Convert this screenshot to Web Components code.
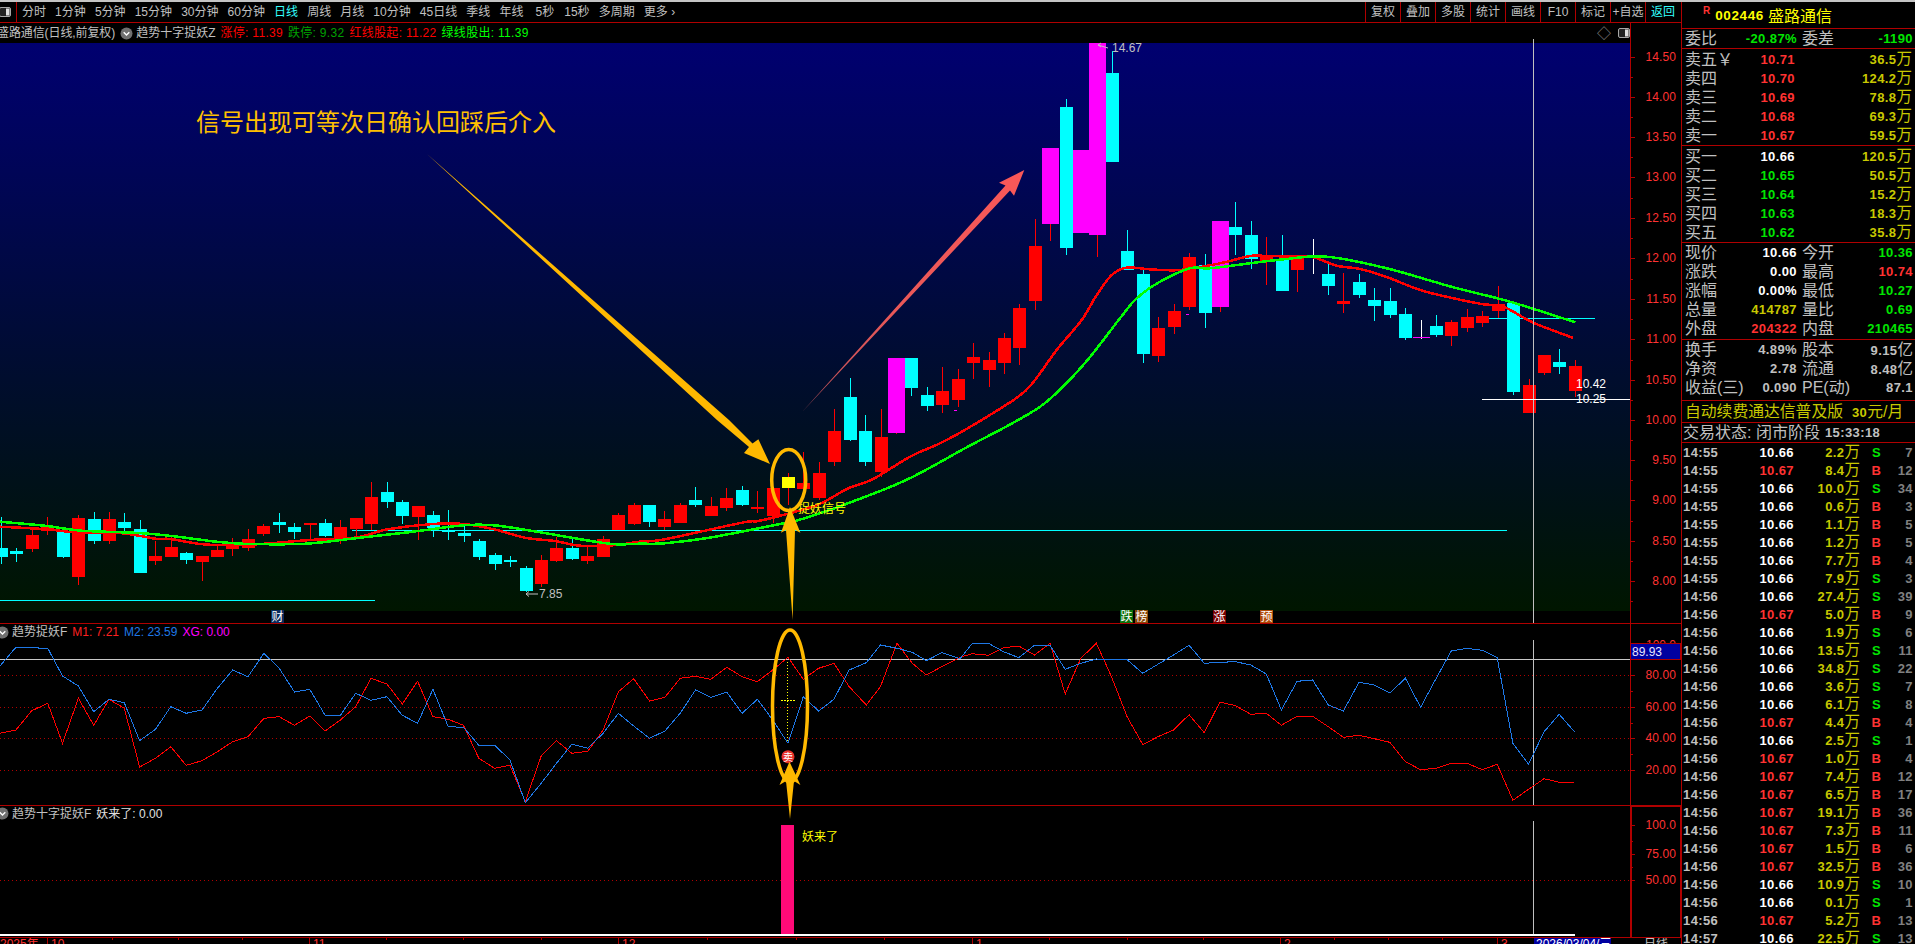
<!DOCTYPE html>
<html lang="zh"><head><meta charset="utf-8"><title>TDX</title>
<style>html,body{margin:0;padding:0;background:#000;height:100%;overflow:hidden}</style></head>
<body><tdx-app></tdx-app>
<script>
const FONT="'Liberation Sans','Noto Sans CJK SC',sans-serif";
const RED='#b00000',TXT='#c0c0c0',UP='#ff3232',DN='#00e600',VOL='#c8c800';
class Base extends HTMLElement{
  constructor(){super();this.attachShadow({mode:'open'});this.shadowRoot.innerHTML=`<style>${this.css()}</style>${this.html()}`;}
  css(){return ':host{display:block}';} html(){return '<slot></slot>';}
}
const boxIcon=`<svg width="12" height="10" viewBox="0 0 12 10"><rect x=".5" y=".5" width="11" height="9" rx="1.5" fill="#222" stroke="#a8a8a8"/><rect x="7" y="1.5" width="3.5" height="7" fill="#e0e0e0"/></svg>`;
const chevIcon=`<svg width="13" height="13" viewBox="0 0 13 13"><circle cx="6.5" cy="6.5" r="6" fill="#707070"/><path d="M3.7 5.2 6.5 8 9.3 5.2" fill="none" stroke="#fff" stroke-width="1.4"/></svg>`;

customElements.define('tdx-toolbar',class extends Base{
  css(){return `:host{display:flex;height:20px;border-bottom:1px solid ${RED};color:${TXT};font:12px/20px ${FONT};white-space:nowrap;overflow:hidden}
  .ic{width:17px;box-sizing:border-box;border-right:1px solid ${RED};display:flex;align-items:center;margin-right:5px;flex:none;overflow:hidden}
  .ic svg{margin-left:-1px}
  .tabs{display:flex;gap:9.1px;flex:1}
  .on{color:#33ffff}.w{margin-left:3px;margin-right:1px}
  .btns{display:flex;height:20px;margin-right:1px}
  .btns span{width:35px;box-sizing:border-box;border-left:1px solid ${RED};text-align:center}
  `;}
  html(){
    const tabs=['分时','1分钟','5分钟','15分钟','30分钟','60分钟','日线','周线','月线','10分钟','45日线','季线','年线','5秒','15秒','多周期','更多 ›'];
    const btn=['复权','叠加','多股','统计','画线','F10','标记','+自选','返回'];
    return `<div class="ic">${boxIcon}</div><div class="tabs">${tabs.map(t=>`<span class="${t==='日线'?'on':''} ${t==='5秒'?'w':''}">${t}</span>`).join('')}</div>
    <div class="btns">${btn.map(t=>`<span style="${t==='返回'?'color:#33ffff':''}">${t}</span>`).join('')}</div>`;
  }
});

customElements.define('tdx-legend',class extends Base{
  css(){return `:host{display:flex;align-items:center;gap:5px;white-space:nowrap;overflow:hidden;font:12px/1 ${FONT};color:${TXT};background:#000}
  ::slotted(*){flex:none}`;}
});

const commonSvgCss=`svg{display:block;overflow:visible;font:12px ${FONT}} text{shape-rendering:auto}`;
const rect=(x,y,w,h,f)=>`<rect x="${x}" y="${y}" width="${w}" height="${h}" fill="${f}"/>`;
const axisLabel=(y,t)=>`<text x="1676" y="${y+4}" text-anchor="end" fill="${UP}" letter-spacing=".1">${t}</text>`;
const tick=(y,l=5)=>rect(1630,y,l,1,RED);
const cross=(a,b)=>rect(1533,a,1,b-a,TXT);

/* candle data: [wickTop, bodyTop, bodyBot, wickBot, colour], read in zones */
const Z=[
 {base:440,c:[[232,324,350,372,'c'],[324,332,342,365,'c'],[262,285,327,335,'r'],[232,262,272,285,'r'],[265,272,351,353,'c'],[225,234,411,435,'r'],[216,237,303,312,'c'],[216,237,303,312,'r'],[219,246,264,275,'c'],[240,267,399,399,'c'],[303,348,363,375,'r'],[288,321,351,351,'r'],[336,339,360,372,'c'],[348,348,366,423,'r'],[318,330,351,351,'r'],[294,312,327,348,'r'],[267,297,324,333,'r'],[252,258,282,288,'r'],[219,246,255,279,'c'],[250,261,276,297,'c'],[249,249,255,300,'r'],[237,249,288,291,'c'],[240,261,297,312,'r'],[234,234,267,290,'r'],[126,171,252,270,'r'],[126,156,186,204,'c'],[180,186,228,252,'c'],[198,198,231,300,'r'],[213,225,264,291,'c'],[210,270,276,300,'c'],[258,279,288,306,'c'],[297,303,351,360,'c'],[339,345,372,390,'c'],[348,360,366,381,'c'],[378,384,453,456,'c'],[345,360,432,441,'r'],[291,324,363,366,'r'],[294,324,357,360,'c'],[321,348,363,372,'r'],[288,297,351,351,'r'],[219,225,270,270,'r'],[189,195,252,255,'r']]},
 {base:420,c:[[255,255,306,321,'c'],[273,297,321,330,'r'],[250,255,309,309,'r'],[201,240,255,261,'c'],[231,258,288,288,'r'],[204,234,264,273,'r'],[198,210,255,258,'c'],[213,261,267,279,'r'],[204,204,288,310,'r'],[159,171,204,255,'y'],[96,189,207,207,'r'],[126,159,234,240,'r']]},
 {base:30,c:[[1137,1203,1296,1307,'r'],[1044,1101,1230,1232,'c'],[1155,1203,1296,1307,'c'],[1137,1221,1325,1340,'r'],[984,984,1209,1212,'m'],[984,984,1074,1098,'c'],[1071,1095,1128,1143,'c'],[1011,1083,1125,1149,'r'],[1017,1047,1110,1131,'r'],[939,981,999,1047,'r'],[966,990,1020,1071,'r'],[909,924,999,1032,'r'],[822,834,954,1005,'r'],[567,648,813,840,'r'],[354,354,582,633,'m'],[207,231,654,675,'c'],[360,360,609,609,'m'],[39,39,615,681,'m'],[63,129,396,396,'c'],[600,663,720,720,'c'],[720,732,972,999,'c'],[861,894,978,996,'r'],[822,843,891,912,'r'],[669,681,831,840,'r'],[672,705,849,894,'c'],[573,573,831,846,'m'],[516,591,615,675,'c'],[573,615,687,717,'c']]},
 {base:200,c:[[111,165,183,255,'r'],[105,180,273,273,'c'],[165,165,210,276,'r'],[117,165,168,222,'w'],[187,222,258,285,'c'],[219,303,312,339,'r'],[222,246,285,294,'c'],[264,300,318,363,'c'],[264,303,345,354,'c'],[324,342,414,420,'c'],[360,411,414,417,'w'],[345,378,405,411,'c'],[360,366,408,438,'r'],[327,351,384,396,'r'],[333,348,369,381,'r'],[258,312,333,354,'r'],[309,309,576,585,'c'],[537,555,639,639,'r'],[465,465,519,525,'r'],[447,486,501,522,'c'],[480,498,573,591,'r']]}
];
const COL={r:'#ff0000',c:'#00ffff',m:'#ff00ff',y:'#ffff00'};
function candles(){
  let i=0,out='';
  for(const z of Z)for(const [wt,bt,bb,wb,k] of z.c){
    const x=1+15.43*i++, cx=Math.round(x), Y=v=>Math.round(z.base+v/3);
    const wc=k==='m'?'#ff0000':k==='y'?'#ff0000':k==='w'?'#ffffff':COL[k];
    const bc=k==='w'?'#ff00ff':COL[k];
    const bw=(k==='m'||k==='w')?17:13;
    out+=rect(cx,Y(wt),1,Y(wb)-Y(wt),wc);
    out+=rect(cx-Math.floor(bw/2),Y(bt),bw,Math.max(1,Y(bb)-Y(bt)),bc);
  }
  return out;
}
const pz5=(a)=>a.map(([X,Y])=>[X/2.45,440+Y/3]);
const pz6=(a)=>a.map(([X,Y])=>[640+X/2.45,420+Y/3]);
const pz9=(a)=>a.map(([X,Y])=>[760+X/3,30+Y/3]);
const pz10=(a)=>a.map(([X,Y])=>[1120+X/3,200+Y/3]);
const pts=a=>a.map(p=>p[0].toFixed(1)+','+p[1].toFixed(1)).join(' ');
function smooth(p){
  let d=`M${p[0][0].toFixed(1)} ${p[0][1].toFixed(1)}`;
  for(let i=0;i<p.length-1;i++){
    const a=p[Math.max(0,i-1)],b=p[i],c=p[i+1],e=p[Math.min(p.length-1,i+2)];
    const c1=[b[0]+(c[0]-a[0])/6,b[1]+(c[1]-a[1])/6],c2=[c[0]-(e[0]-b[0])/6,c[1]-(e[1]-b[1])/6];
    d+=`C${c1[0].toFixed(1)} ${c1[1].toFixed(1)} ${c2[0].toFixed(1)} ${c2[1].toFixed(1)} ${c[0].toFixed(1)} ${c[1].toFixed(1)}`;
  }
  return d;
}
const maRed=[...pz5([[0,260],[115,268],[190,278],[300,280],[380,296],[418,297],[490,312],[570,316],[640,312],[760,300],[870,293],[950,268],[1060,252],[1135,252],[1210,268],[1290,294],[1360,303],[1420,317],[1500,316],[1568,305]]),
 ...pz6([[60,358],[250,308],[290,303],[360,282],[440,252],[510,205]]),
 ...pz9([[340,1347],[450,1280],[540,1240],[640,1185],[775,1100],[825,1050],[890,960],[965,870],[1010,795],[1055,735],[1100,713]]),
 ...pz10([[90,208],[180,210],[300,190],[390,168],[440,168],[520,170],[580,172],[650,197],[720,207],[800,231],[900,270],[1000,295],[1090,313],[1150,320],[1240,368],[1360,414]])];
const maGreen=[...pz5([[0,245],[115,258],[200,272],[340,279],[420,288],[530,305],[610,312],[750,311],[870,295],[1000,277],[1135,256],[1210,256],[1300,272],[1400,293],[1500,312],[1568,311]]),
 ...pz6([[60,370],[170,353],[330,315],[400,296],[520,245]]),
 ...pz9([[445,1347],[620,1252],[760,1178],[860,1115],[970,1005]]),
 ...pz10([[0,355],[50,295],[120,245],[210,205],[270,205],[390,190],[500,177],[620,170],[800,205],[1000,262],[1170,305],[1366,367]])];

customElements.define('tdx-kline-pane',class extends Base{
  css(){return `:host{display:block;height:600px;border-bottom:1px solid ${RED};position:relative}
  tdx-legend{height:20px}
  .r{margin-left:auto;display:flex;gap:7px;align-items:center;padding-right:51px;color:#8a8a8a;font-size:14px}
  .s{letter-spacing:.3px}
  ${commonSvgCss}`;}
  html(){
    const ticks=[[57,'14.50'],[97,'14.00'],[137,'13.50'],[177,'13.00'],[218,'12.50'],[258,'12.00'],[299,'11.50'],[339,'11.00'],[380,'10.50'],[420,'10.00'],[460,'9.50'],[500,'9.00'],[541,'8.50'],[581,'8.00']];
    let ax=rect(1630,23,1,600,RED);
    ticks.forEach(([y,t],i)=>{ax+=tick(y)+axisLabel(y,t); const m=i<ticks.length-1?Math.round((y+ticks[i+1][0])/2):601; ax+=tick(m,3);});
    const mk=(x,bg,t)=>rect(x,610,13,12.5,bg)+`<text x="${x+.5}" y="621" fill="#fff" style="font-size:12px">${t}</text>`;
    return `<tdx-legend>
      <span style="margin-left:-3px;letter-spacing:-.1px">盛路通信(日线,前复权)</span>
      <span style="display:flex;margin:0 -2px 0 0">${chevIcon}</span>
      <span>趋势十字捉妖Z</span>
      <span class="s" style="color:#ff0000">涨停: 11.39</span>
      <span class="s" style="color:#00a000">跌停: 9.32</span>
      <span class="s" style="color:#ff0000">红线股起: 11.22</span>
      <span class="s" style="color:#00ff00">绿线股出: 11.39</span>
      <span class="r"><span>◇</span>${boxIcon}</span>
    </tdx-legend>
    <svg width="1681" height="580" viewBox="0 43 1681 580" shape-rendering="crispEdges">
      <defs><linearGradient id="bg" x1="0" y1="0" x2="0" y2="1"><stop offset="0" stop-color="#000070"/><stop offset="1" stop-color="#001600"/></linearGradient></defs>
      <rect x="0" y="43" width="1630" height="568" fill="url(#bg)"/>
      ${rect(0,600,375,1,'#00ffff')}${rect(352,530,1155,1,'#00ffff')}${rect(1478,318,117,1,'#00ffff')}
      ${candles()}
      ${rect(954,410,3,1,'#ff00ff')}${rect(1186,314,3,1,'#ff00ff')}
      <path d="${smooth(maRed)}" fill="none" stroke="#ff0000" stroke-width="2.5"/>
      <path d="${smooth(maGreen)}" fill="none" stroke="#00ff00" stroke-width="2.5"/>
      ${cross(39,623)}
      ${rect(1482,399,148,1,'#ffffff')}
      <text x="1112" y="52" fill="${TXT}">14.67</text>
      <path d="M1098 45 1108 48 M1098 45 1101 43 M1098 45 1101 47" stroke="${TXT}" fill="none" shape-rendering="auto"/>
      <text x="539" y="598" fill="${TXT}">7.85</text>
      <path d="M526 594 H538 M526 594 529 591.5 M526 594 529 596.5" stroke="${TXT}" fill="none" shape-rendering="auto"/>
      <text x="1576" y="388" fill="#fff">10.42</text>
      <text x="1576" y="403" fill="#fff">10.25</text>
      ${mk(271,'#0a2a5c','财')}${mk(1120,'#0a700a','跌')}${mk(1135,'#8a4808','榜')}${mk(1213,'#780000','涨')}${mk(1260,'#b04a08','预')}
      ${ax}
    </svg>`;
  }
});

const z7=a=>a.map(([X,Y])=>[X/1.6333,620+Y/3]);
const z8=a=>a.map(([X,Y])=>[960+X/2.1778,620+Y/3]);
const blue=[...z7([[0,138],[26,82],[78,85],[102,168],[128,198],[153,275],[178,238],[203,248],[228,362],[254,328],[279,260],[304,280],[330,270],[355,205],[380,150],[405,170],[431,100],[456,145],[481,216],[506,208],[531,286],[556,286],[581,220],[606,241],[632,230],[657,286],[682,310],[707,208],[732,320],[757,322],[782,376],[808,376],[833,420],[858,548],[884,490],[909,430],[934,373],[960,385],[985,340],[1010,280],[1035,318],[1061,355],[1086,333],[1111,280],[1136,210],[1161,232],[1187,216],[1212,280],[1237,238],[1262,300],[1287,370],[1312,230],[1337,273],[1362,238],[1387,150],[1415,128],[1438,75],[1465,85],[1490,97],[1513,122],[1538,98]]),
 ...z8([[0,116],[27,70],[62,70],[95,95],[128,113],[162,76],[196,76],[229,148],[263,130],[297,117],[364,119],[398,160],[431,133],[465,105],[499,76],[532,130],[566,127],[600,125],[633,135],[667,162],[700,270],[734,184],[768,180],[802,255],[835,273],[869,187],[902,195],[936,219],[970,175],[1003,262],[1037,175],[1070,93],[1104,85],[1138,91],[1170,113],[1204,370],[1238,433],[1272,335],[1305,283],[1338,335]])];
const redL=[...z7([[0,340],[26,330],[52,272],[78,250],[102,370],[128,235],[153,316],[178,238],[203,265],[228,441],[254,415],[279,380],[304,436],[330,422],[355,395],[380,365],[405,350],[431,295],[456,290],[481,316],[506,288],[531,333],[556,300],[581,260],[606,175],[632,192],[657,252],[682,184],[707,290],[732,298],[757,316],[782,415],[808,445],[833,436],[858,545],[884,408],[909,362],[934,400],[960,394],[985,330],[1010,215],[1035,176],[1061,243],[1086,232],[1111,175],[1136,169],[1161,178],[1187,142],[1212,170],[1237,185],[1262,150],[1287,112],[1312,178],[1337,145],[1362,130],[1387,200],[1415,255],[1438,200],[1465,70],[1490,130],[1513,165],[1538,140]]),
 ...z8([[0,112],[27,101],[62,106],[95,83],[128,78],[162,105],[196,70],[229,222],[263,115],[297,70],[330,170],[364,290],[398,374],[431,350],[465,330],[499,284],[532,338],[566,246],[600,257],[633,283],[667,280],[700,316],[734,289],[768,289],[802,320],[835,352],[869,346],[902,356],[936,367],[970,425],[1003,449],[1037,445],[1070,430],[1104,430],[1138,449],[1170,433],[1204,541],[1238,508],[1272,476],[1305,487],[1338,487]])];

customElements.define('tdx-osc-pane',class extends Base{
  css(){return `:host{display:block;height:181px;border-bottom:1px solid ${RED}}
  tdx-legend{height:16px}
  ${commonSvgCss}`;}
  html(){
    const dots=[675,707,738,770].map(y=>`<line x1="0" y1="${y+.5}" x2="1630" y2="${y+.5}" stroke="#b00000" stroke-dasharray="1 3"/>`).join('');
    let ax=rect(1630,624,1,181,RED);
    [[675,'80.00'],[707,'60.00'],[738,'40.00'],[770,'20.00']].forEach(([y,t])=>ax+=tick(y)+axisLabel(y,t));
    [691,723,754].forEach(y=>ax+=tick(y,3));
    return `<tdx-legend>
      <span style="display:flex;margin-left:-4px;margin-right:-2px">${chevIcon}</span>
      <span>趋势捉妖F</span>
      <span style="color:#ff2020">M1: 7.21</span>
      <span style="color:#1f78e6">M2: 23.59</span>
      <span style="color:#ff00ff">XG: 0.00</span>
    </tdx-legend>
    <svg width="1681" height="165" viewBox="0 640 1681 165" shape-rendering="crispEdges">
      ${dots}
      ${rect(0,659,1630,1,'#c8c8c8')}
      ${cross(640,805)}
      <polyline points="${pts(redL)}" fill="none" stroke="#ff0000"/>
      <polyline points="${pts(blue)}" fill="none" stroke="#1f78e6"/>
      <line x1="787.5" y1="662" x2="787.5" y2="743" stroke="#ffff00" stroke-dasharray="1 2"/>
      <line x1="781" y1="700.5" x2="795" y2="700.5" stroke="#ffff00" stroke-dasharray="2 1"/>
      ${ax}
      <text x="1676" y="649" text-anchor="end" fill="${UP}">100.0</text>
      <rect x="1630.5" y="643.5" width="50" height="16" fill="#0000a0" stroke="${RED}"/>
      <text x="1632" y="656" fill="#e8e8ff">89.93</text>
    </svg>`;
  }
});

customElements.define('tdx-ind-pane',class extends Base{
  css(){return `:host{display:block;height:131px;border-bottom:1px solid ${RED}}
  tdx-legend{height:15px}
  ${commonSvgCss}`;}
  html(){
    return `<tdx-legend>
      <span style="display:flex;margin-left:-4px;margin-right:-2px">${chevIcon}</span>
      <span>趋势十字捉妖F</span>
      <span style="color:#e0e0e0">妖来了: 0.00</span>
    </tdx-legend>
    <svg width="1681" height="116" viewBox="0 821 1681 116" shape-rendering="crispEdges">
      <line x1="0" y1="880.5" x2="1630" y2="880.5" stroke="#b00000" stroke-dasharray="1 3"/>
      ${rect(1533,821,1,114,TXT)}
      ${rect(781,825,13,110,'#ff0a78')}
      ${rect(0,934,1575,2,'#ffffff')}
      <text x="802" y="841" fill="#ffff00">妖来了</text>
      ${rect(1630,806,2,131,RED)}${rect(1630,806,51,1,RED)}${rect(1680,806,2,131,RED)}
      ${tick(825)+tick(854)+tick(880)+tick(841,3)+tick(867,3)}
      ${axisLabel(825,'100.0')+axisLabel(854,'75.00')+axisLabel(880,'50.00')}
    </svg>`;
  }
});

customElements.define('tdx-date-axis',class extends Base{
  css(){return `:host{display:block;height:6px;overflow:hidden}
  svg{display:block;font:12px ${FONT}} text{shape-rendering:auto}`;}
  html(){
    const major=[[47,'10'],[309,'11'],[618,'12'],[972,'1'],[1280,'2'],[1497,'3']];
    const minor=[112,178,242,386,463,541,707,796,884,1049,1127,1203,1334,1388,1442];
    let s='';
    major.forEach(([x,t])=>s+=rect(x,938,1,6,RED)+`<text x="${x+4}" y="948" fill="${UP}">${t}</text>`);
    minor.forEach(x=>s+=rect(x,938,1,2,RED));
    return `<svg width="1681" height="6" viewBox="0 938 1681 6" shape-rendering="crispEdges">
      <text x="0" y="948" fill="${UP}">2025年</text>${s}
      ${rect(1534,938,77,6,'#0000a0')}<text x="1536" y="948" fill="#fff">2026/03/04/三</text>
      <text x="1644" y="948" fill="${TXT}">日线</text>
    </svg>`;
  }
});

customElements.define('tdx-annotations',class extends Base{
  css(){return `:host{display:block;position:absolute;left:0;top:0;width:1681px;height:942px;pointer-events:none;font:12px ${FONT}}
  svg{display:block;overflow:visible}`;}
  html(){
    const O='#ffb900';
    return `<svg width="1681" height="942" viewBox="0 2 1681 942">
      <defs><linearGradient id="rg" gradientUnits="userSpaceOnUse" x1="802" y1="412" x2="1024" y2="170"><stop offset="0" stop-color="#b85058"/><stop offset=".4" stop-color="#e85858"/><stop offset="1" stop-color="#fa5858"/></linearGradient></defs>
      <text x="196" y="131" fill="#ffc000" style="font-size:24px">信号出现可等次日确认回踩后介入</text>
      <polygon points="427,154 729,420 752.5,443.5 758.4,439.3 770,464 744,453 749,447 717,420" fill="${O}"/>
      <polygon points="802.3,411.7 1005.5,185.5 999,182.7 1024.3,170 1014,195.7 1010,190.5" fill="url(#rg)"/>
      <text x="798" y="513" fill="#ffff00">捉妖信号</text>
      <ellipse cx="788.7" cy="480" rx="17" ry="30.5" fill="none" stroke="${O}" stroke-width="3.5"/>
      <polygon points="790,507 800.4,532.7 795,530 792.6,620 786,530 781,532.7" fill="${O}"/>
      <ellipse cx="790" cy="706" rx="17.5" ry="76" fill="none" stroke="${O}" stroke-width="3.5"/>
      <circle cx="788" cy="756.7" r="6.5" fill="#e8302a"/>
      <text x="783" y="761" fill="#fff" style="font-size:10px">卖</text>
      <polygon points="789.5,761.7 800.4,785 794,781 790,819 786,781 779.5,785" fill="${O}"/>
    </svg>`;
  }
});

/* right panel */
const num=(s,c)=>`<span style="font:bold 13px/19px ${FONT};letter-spacing:.4px;color:${c}">${s}</span>`;
const wan=(n,u,c=VOL)=>`<span style="font:bold 13px/19px ${FONT};letter-spacing:.4px;color:${c}">${n}</span><span style="font:15.5px/19px ${FONT};color:${c}">${u}</span>`;

customElements.define('tdx-order-book',class extends Base{
  css(){return `:host{display:block;border-bottom:1px solid ${RED};padding-bottom:1px}
  .row{display:grid;grid-template-columns:1fr auto;position:relative;height:19px;align-items:center;padding:0 3px 0 3px;font:16px/19px ${FONT};color:${TXT};white-space:nowrap}
  .row .p{position:absolute;right:120px}
  .v{justify-self:end}`;}
  html(){
    const kind=this.getAttribute('kind');
    const sell=[['卖五￥','10.71','36.5'],['卖四','10.70','124.2'],['卖三','10.69','78.8'],['卖二','10.68','69.3'],['卖一','10.67','59.5']];
    const buy=[['买一','10.66','120.5'],['买二','10.65','50.5'],['买三','10.64','15.2'],['买四','10.63','18.3'],['买五','10.62','35.8']];
    const rows=kind==='sell'?sell:buy;
    return rows.map((r,i)=>{
      const c=kind==='sell'?UP:(i===0?'#fff':DN);
      return `<div class="row"><span>${r[0]}</span><span class="p">${num(r[1],c)}</span><span class="v">${wan(r[2],'万')}</span></div>`;
    }).join('');
  }
});

customElements.define('tdx-stat-grid',class extends Base{
  css(){return `:host{display:block;border-bottom:1px solid ${RED}}
  :host([kind=a]){padding-bottom:1px} :host([kind=b]){padding-bottom:3px}
  .row{display:grid;grid-template-columns:115px 1fr;height:19px;padding:0 2px 0 3px;font:16px/19px ${FONT};color:${TXT};white-space:nowrap}
  .c{display:flex;justify-content:space-between;padding-right:3px}
  .c + .c{padding:0 0 0 2px}`;}
  html(){
    const W='#fff',G=TXT;
    const data=this.getAttribute('kind')==='a'?[
      ['现价','10.66',W,'今开','10.36',DN],['涨跌','0.00',W,'最高','10.74',UP],['涨幅','0.00%',W,'最低','10.27',DN],['总量','414787',VOL,'量比','0.69',DN],['外盘','204322',UP,'内盘','210465',DN]
    ]:[
      ['换手','4.89%',G,'股本','9.15|亿',G],['净资','2.78',G,'流通','8.48|亿',G],['收益(三)','0.090',G,'PE(动)','87.1',G]
    ];
    const val=(s,c)=>s.includes('|')?`<span>${num(s.split('|')[0],c)}<span style="font-size:15.5px">${s.split('|')[1]}</span></span>`:num(s,c);
    return data.map(r=>`<div class="row"><div class="c"><span>${r[0]}</span>${val(r[1],r[2])}</div><div class="c"><span>${r[3]}</span>${val(r[4],r[5])}</div></div>`).join('');
  }
});

customElements.define('tdx-ad-row',class extends Base{
  css(){return `:host{display:flex;height:22px;align-items:center;box-sizing:border-box;border-bottom:1px solid ${RED};padding-left:3px;font:15.8px/1 ${FONT};color:${VOL};white-space:nowrap;gap:9px}`;}
  html(){return `<span>自动续费通达信普及版</span><span><b style="font:bold 13px ${FONT};letter-spacing:.4px">30</b>元/月</span>`;}
});
customElements.define('tdx-state-row',class extends Base{
  css(){return `:host{display:flex;height:20px;align-items:center;box-sizing:border-box;border-bottom:1px solid ${RED};padding-left:1px;font:16px/1 ${FONT};color:${TXT};white-space:nowrap;gap:5px}`;}
  html(){return `<span>交易状态: 闭市阶段</span>${num('15:33:18',TXT)}`;}
});
const TICKS=`14:55 10.66 2.2 S 7|14:55 10.67 8.4 B 12|14:55 10.66 10.0 S 34|14:55 10.66 0.6 B 3|14:55 10.66 1.1 B 5|14:55 10.66 1.2 B 5|14:55 10.66 7.7 B 4|14:55 10.66 7.9 S 3|14:56 10.66 27.4 S 39|14:56 10.67 5.0 B 9|14:56 10.66 1.9 S 6|14:56 10.66 13.5 S 11|14:56 10.66 34.8 S 22|14:56 10.66 3.6 S 7|14:56 10.66 6.1 S 8|14:56 10.67 4.4 B 4|14:56 10.66 2.5 S 1|14:56 10.67 1.0 B 4|14:56 10.67 7.4 B 12|14:56 10.67 6.5 B 17|14:56 10.67 19.1 B 36|14:56 10.67 7.3 B 11|14:56 10.67 1.5 B 6|14:56 10.67 32.5 B 36|14:56 10.66 10.9 S 10|14:56 10.66 0.1 S 1|14:56 10.67 5.2 B 13|14:57 10.66 22.5 S 13`.split('|').map(s=>s.split(' '));
customElements.define('tdx-tick-list',class extends Base{
  css(){return `:host{display:block;flex:1;min-height:0;overflow:hidden;padding-left:1px}
  .r{display:grid;grid-template-columns:40px 71px 66px 25px 28px;height:18px;align-items:center;white-space:nowrap;font:bold 13px/18px ${FONT};letter-spacing:.4px;box-sizing:border-box}
  .t{color:${TXT}}.p,.v,.n{text-align:right}.s{text-align:center;padding-left:8px}.n{color:#808080}
  .u{font:15.5px/18px ${FONT};letter-spacing:0}`;}
  html(){
    return TICKS.map(([t,p,v,s,n])=>`<div class="r"><span class="t">${t}</span><span class="p" style="color:${p==='10.67'?UP:'#fff'}">${p}</span><span class="v" style="color:${VOL}">${v}<span class="u">万</span></span><span class="s" style="color:${s==='S'?DN:UP}">${s}</span><span class="n">${n}</span></div>`).join('');
  }
});
customElements.define('tdx-quote-panel',class extends Base{
  css(){return `:host{display:flex;flex-direction:column;border-left:1px solid ${RED};height:942px;overflow:hidden;font:16px ${FONT}}
  .hd{height:26px;flex:none;border-bottom:1px solid ${RED};display:flex;align-items:center;padding-left:21px;color:#ffff00;white-space:nowrap}
  .hd i{font:normal bold 10px ${FONT};color:${UP};margin-right:5px;align-self:flex-start;margin-top:3px}
  .hd b{font:bold 13.5px ${FONT};letter-spacing:.6px;margin-right:4px}
  .hd span{font-size:16px}
  .wb{height:19px;border-bottom:1px solid ${RED};display:grid;grid-template-columns:115px 1fr;padding:0 2px 0 3px;font:16px/19px ${FONT};color:${TXT}}
  .wb div{display:flex;justify-content:space-between;padding-right:3px}
  .wb div+div{padding:0 0 0 2px}`;}
  html(){
    return `<div class="hd"><i>R</i><b>002446</b><span>盛路通信</span></div>
    <div class="wb"><div><span>委比</span>${num('-20.87%',DN)}</div><div><span>委差</span>${num('-1190',DN)}</div></div>
    <tdx-order-book kind="sell"></tdx-order-book>
    <tdx-order-book kind="buy"></tdx-order-book>
    <tdx-stat-grid kind="a"></tdx-stat-grid>
    <tdx-stat-grid kind="b"></tdx-stat-grid>
    <tdx-ad-row></tdx-ad-row>
    <tdx-state-row></tdx-state-row>
    <tdx-tick-list></tdx-tick-list>`;
  }
});
customElements.define('tdx-app',class extends Base{
  css(){return `:host{display:grid;grid-template-columns:1681px 234px;width:1915px;height:944px;border-top:2px solid #c4c4c4;box-sizing:border-box;overflow:hidden;background:#000}
  .left{position:relative;display:flex;flex-direction:column}`;}
  html(){
    return `<div class="left"><tdx-toolbar></tdx-toolbar><tdx-kline-pane></tdx-kline-pane><tdx-osc-pane></tdx-osc-pane><tdx-ind-pane></tdx-ind-pane><tdx-date-axis></tdx-date-axis><tdx-annotations></tdx-annotations></div><tdx-quote-panel></tdx-quote-panel>`;
  }
});
</script></body></html>
